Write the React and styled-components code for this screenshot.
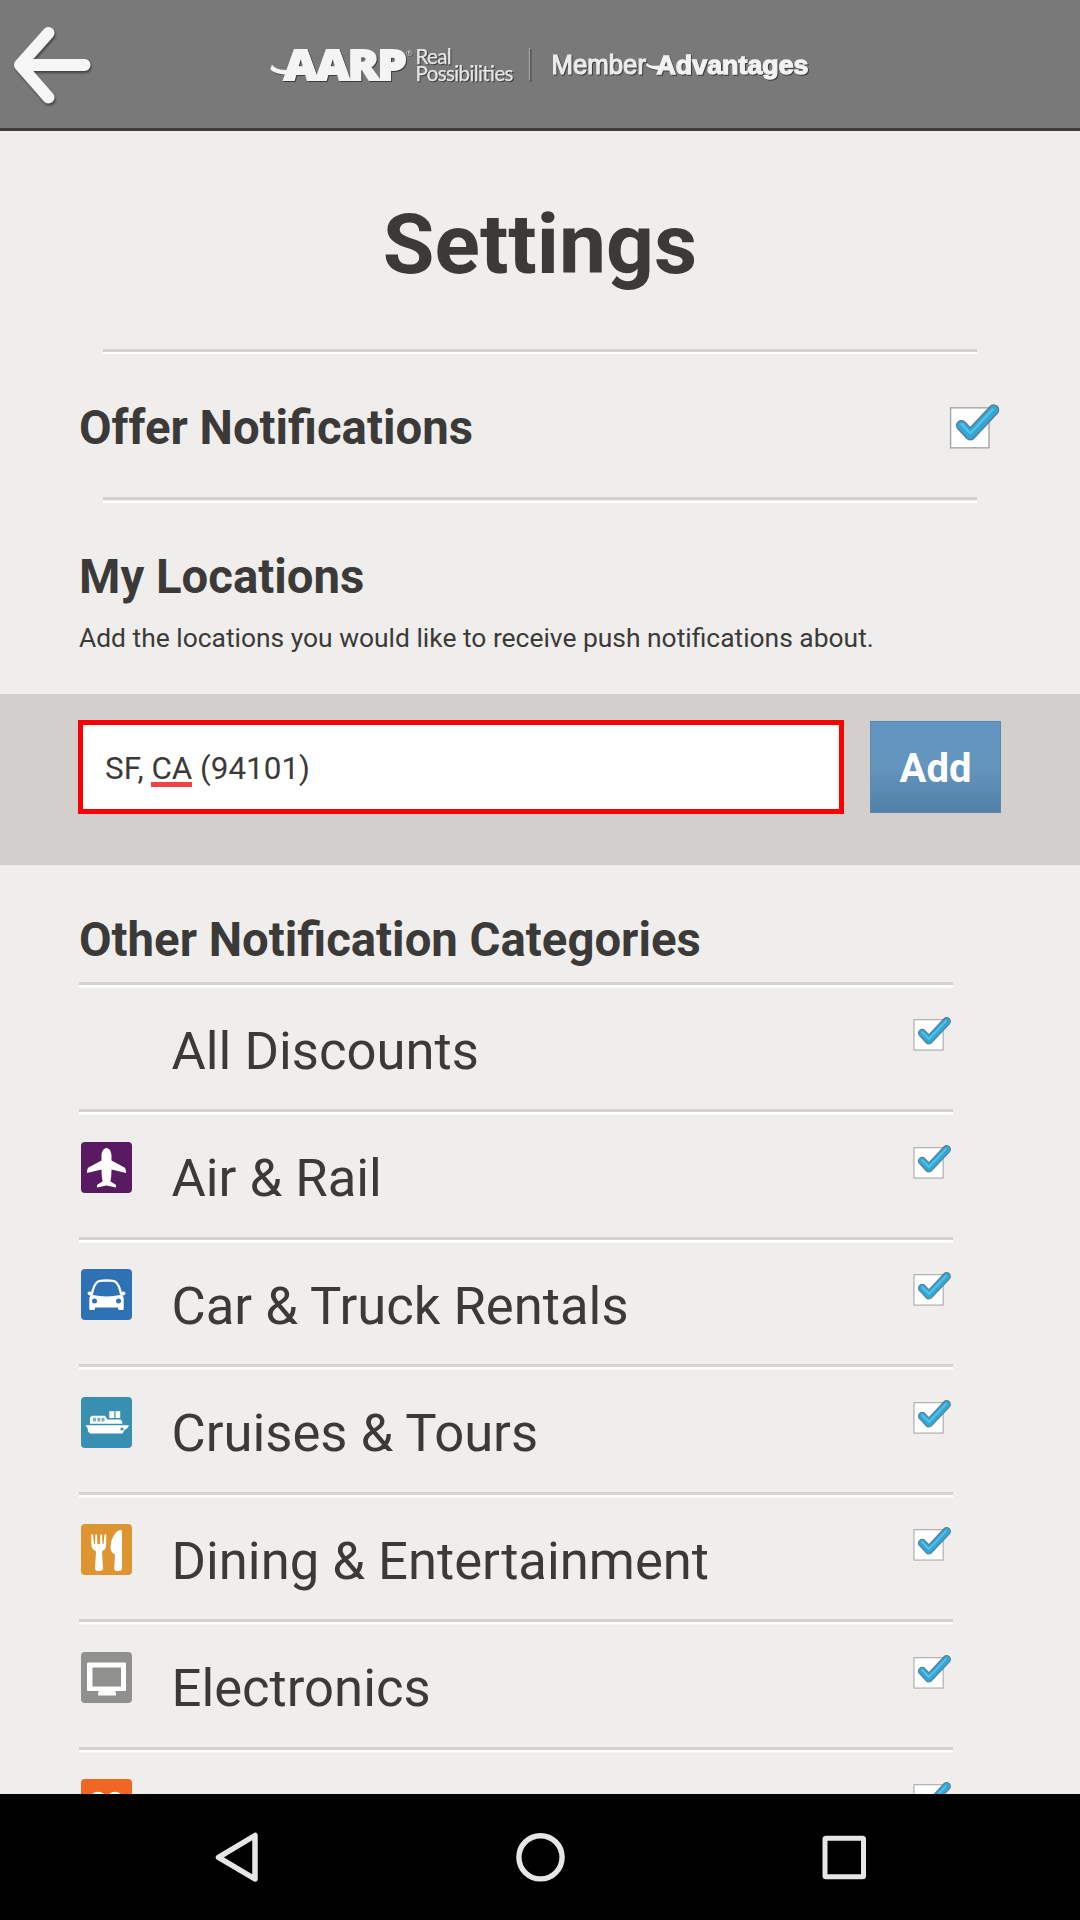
import React from "react";
import styled, { createGlobalStyle } from "styled-components";

const GlobalStyle = createGlobalStyle`
  * { box-sizing: border-box; }
  body { margin: 0; background: #efeeec; }
`;

const Screen = styled.div`
  display: flex;
  flex-direction: column;
  width: 1080px;
  height: 1920px;
  overflow: hidden;
  background: #efeeec;
  color: #3b3a39;
  font-family: Roboto, "Noto Sans", sans-serif;
`;

const Header = styled.header`
  display: grid;
  grid-template-columns: 1fr auto 1fr;
  align-items: center;
  flex: none;
  height: 131px;
  background: #797979;
  border-bottom: 3px solid #3d3b3b;
`;

const BackButton = styled.button`
  display: flex;
  width: 90px;
  height: 90px;
  margin-left: 8px;
  padding: 0;
  border: 0;
  background: none;
  svg { filter: drop-shadow(1px 2px 1px rgba(0, 0, 0, 0.45)); }
`;

const Logo = styled.svg`
  display: block;
  filter: drop-shadow(1px 1.5px 0.6px rgba(0, 0, 0, 0.5));
`;

const Main = styled.main`
  flex: 1;
  min-height: 0;
  overflow: hidden;
`;

const Title = styled.h1`
  margin: 0;
  padding-top: 54px;
  height: 217.5px;
  font-size: 84px;
  line-height: 120px;
  font-weight: 700;
  text-align: center;
`;

const Rule = styled.hr`
  margin: 0 103px;
  height: 5.5px;
  border: 0;
  border-top: 3px solid #d3d2cf;
  border-bottom: 2.5px solid #fff;
`;

const Heading = styled.h2`
  margin: 0;
  font-size: 47.3px;
  line-height: 60px;
  font-weight: 700;
`;

const OfferRow = styled.section`
  display: flex;
  align-items: center;
  justify-content: space-between;
  height: 143px;
  padding: 5px 78.5px 0 79px;
  svg { margin-top: -5px; }
`;

const Locations = styled.section`
  height: 191.5px;
  padding: 44px 79px 0;
`;

const Hint = styled.p`
  margin: 13.5px 0 0;
  font-size: 26.4px;
  line-height: 36px;
  white-space: nowrap;
`;

const AddBand = styled.form`
  display: flex;
  align-items: flex-start;
  gap: 26px;
  height: 170.5px;
  padding: 26px 79px 0 78px;
  background: #d2cfcc;
`;

const Field = styled.div`
  flex: 1;
  height: 94px;
  padding: 2px 22px 0;
  border: 5px solid #fb0000;
  background: #fff;
  font-size: 31.4px;
  line-height: 84px;
`;

const Misspelled = styled.span`
  display: inline-block;
  height: 37px;
  line-height: 37px;
  border-bottom: 5px solid #f04444;
`;

const AddButton = styled.button`
  width: 131px;
  height: 92px;
  margin-top: 1px;
  padding: 3px 0 0;
  border: 1px solid #5a8ab4;
  background: linear-gradient(#6295c1 0%, #6495bd 50%, #5280a7 100%);
  color: #fff;
  font: 700 40px Roboto, sans-serif;
`;

const Categories = styled.section`
  padding: 45px 127px 0 79px;
`;

const List = styled.ul`
  margin: 0;
  padding: 12px 0 0;
  list-style: none;
`;

const Row = styled.li`
  display: grid;
  grid-template-columns: 92.5px 1fr 41px;
  align-items: start;
  height: 127.5px;
  border-top: 3px solid #d3d2cf;
  box-shadow: inset 0 2.5px 0 #fff;
`;

const Tile = styled.span`
  display: block;
  width: 51px;
  height: 51px;
  margin: 29.5px 0 0 1.5px;
  border-radius: 4px;
  background: ${(p) => p.$color};
  svg { display: block; }
`;

const Label = styled.span`
  padding-top: 36px;
  font-size: 52.6px;
  line-height: 60px;
  white-space: nowrap;
`;

const CheckSlot = styled.span`
  padding-top: 28.5px;
`;

const NavBar = styled.nav`
  display: flex;
  align-items: center;
  justify-content: space-between;
  flex: none;
  height: 126px;
  padding: 0 211px 0 211px;
  background: #000;
  svg { display: block; }
`;

const CheckArt = styled.svg`
  display: block;
`;

function Check({ size }) {
  return (
    <CheckArt width={size} height={size} viewBox="0 0 52 52">
      <rect x="2.500" y="8.500" width="37" height="38.500" fill="#fff" stroke="#aaa9a8" strokeWidth="1.400" />
      <path d="M13 25.500L21.500 34.500L44 10.500" fill="none" stroke="#5d8194" strokeWidth="10.800" strokeLinejoin="round" strokeLinecap="round" />
      <path d="M13 25.500L21.500 34.500L44 10.500" fill="none" stroke="#30a7d7" strokeWidth="7.800" strokeLinejoin="round" strokeLinecap="round" />
      <path d="M13 24.200L21.500 33L43 10.200" fill="none" stroke="#64cdee" strokeWidth="2.400" strokeLinejoin="round" strokeLinecap="round" opacity="0.7" />
    </CheckArt>
  );
}

const icons = {
  plane: (
    <path d="M25.500 6C28.500 6 30.500 10 30.500 14V18.500L43.500 25.500Q45 26.500 45 31L30.500 27.500Q30.500 34 29.500 39.500L34.500 42.500Q35.500 43.500 35 45.500L25.500 43.500L16 45.500Q15.500 43.500 16.500 42.500L21.500 39.500Q20.500 34 20.500 27.500L6 31Q6 26.500 7.500 25.500L20.500 18.500V14C20.500 10 22.500 6 25.500 6Z" fill="#fff" />
  ),
  car: (
    <g>
      <path d="M11 25Q12.500 16 16.500 12.800Q18 11.500 25.500 11.300Q33 11.500 34.500 12.800Q38.500 16 40 25" fill="none" stroke="#fff" strokeWidth="2.200" />
      <path d="M6.500 24Q7 22 9.500 22.500Q11.300 23 11.800 26Q25.500 28.800 39.200 26Q39.700 23 41.500 22.500Q44 22 44.500 24Q44.500 26 41.500 26.500Q43 28 42.700 31V39.500Q42.700 41 41.500 41H38.500Q37 41 37 39.500V38.500H14V39.500Q14 41 12.500 41H9.500Q8.300 41 8.300 39.500V31Q8 28 9.500 26.500Q6.500 26 6.500 24Z" fill="#fff" />
      <circle cx="13.500" cy="32" r="2.500" fill="#2e72b5" />
      <circle cx="37.500" cy="32" r="2.500" fill="#2e72b5" />
    </g>
  ),
  ship: (
    <g>
      <path d="M4.500 28.200H48L46.500 31L43 33.500L41.500 36.500H9L6.800 34V31.500Z" fill="#fff" />
      <path d="M9 26.800V20.500L11 18.800H24L26.500 22.500H39Q41 22.500 41.500 26.800Z" fill="#fff" />
      <path d="M12 20.800h3v3.800h-3zM16.300 20.800h3v3.800h-3zM20.500 20.800h3v3.800h-3z" fill="#75b3c8" />
      <rect x="28.300" y="14.200" width="5" height="6.800" fill="#fff" />
      <rect x="34.500" y="14.200" width="4.700" height="6.800" fill="#fff" />
      <circle cx="41" cy="32" r="1.600" fill="#388faf" />
    </g>
  ),
  dining: (
    <g fill="#fff">
      <path d="M10.200 10.500H12L13 20H14L14.400 10.500H16L16.400 20H19L19.300 10.500H21L21.400 20H22.500L23.500 10.500H25.200V21Q25 25.500 21 27.500L22 44.500Q22 47 18 47Q14 47 14 44.500L15 27.500Q10.800 25.500 10.300 21Z" />
      <path d="M41 7V44.500Q41 47 37 47Q33.200 47 33.200 44.500L34 30.500Q29.500 28.500 29.500 23Q29.500 17 32.500 12Q36 6 39.500 6Q41 6 41 7Z" />
    </g>
  ),
  screen: (
    <g>
      <path d="M7 10.500H44Q45 10.500 45 12V38Q45 39 44 39H34.500V41H35V43.500H17V41H17.500V39H7Q6 39 6 38V12Q6 10.500 7 10.500Z" fill="#fff" />
      <rect x="11.500" y="15.500" width="28.500" height="19" fill="#90908e" />
    </g>
  ),
  goggles: (
    <g fill="none" stroke="#fff" strokeWidth="2.500">
      <circle cx="17" cy="21.500" r="7.500" />
      <circle cx="34" cy="21.500" r="7.500" />
    </g>
  ),
};

const categories = [
  { label: "All Discounts" },
  { label: "Air & Rail", icon: "plane", color: "#581b61" },
  { label: "Car & Truck Rentals", icon: "car", color: "#2e72b5" },
  { label: "Cruises & Tours", icon: "ship", color: "#388faf" },
  { label: "Dining & Entertainment", icon: "dining", color: "#dd9531" },
  { label: "Electronics", icon: "screen", color: "#90908e" },
  { label: "", icon: "goggles", color: "#f26522" },
];

export default function App() {
  return (
    <Screen>
      <GlobalStyle />
      <Header>
        <BackButton aria-label="Back">
          <svg width="90" height="90" viewBox="8 19 90 90">
            <path d="M48.500 33L20 65L48.500 97.500M20 65H84.500" fill="none" stroke="#f6f6f6" strokeWidth="12" strokeLinecap="round" strokeLinejoin="round" />
          </svg>
        </BackButton>
        <Logo width="560" height="60" viewBox="260 35 560 60">
          <text x="284" y="80.500" fill="#f4f4f4" stroke="#f4f4f4" strokeWidth="2" fontFamily="Open Sans, sans-serif" fontWeight="800" fontSize="43" letterSpacing="-1.500" textLength="121" lengthAdjust="spacingAndGlyphs">AARP</text>
          <path d="M272 65.500C276 71 283 71.500 292 70.500C303 69.500 309 73 312 78C305 73.500 296 74.500 288 75.500C279 76 272 73 270.300 70Z" fill="#f4f4f4" />
          <text x="406" y="57" fontSize="8" fill="#ddd" fontFamily="Lato, sans-serif">®</text>
          <g fill="#e6e6e6" stroke="#e6e6e6" strokeWidth="0.250" fontFamily="Lato, sans-serif" fontSize="20.500">
            <text x="415.500" y="65" textLength="36">Real</text>
            <text x="415.500" y="81.500" textLength="98">Possibilities</text>
          </g>
          <path d="M529.500 49V81.500" stroke="#a2a2a2" strokeWidth="1.500" />
          <text x="551.500" y="74.500" fontSize="27.500" fill="#ececec" stroke="#ececec" strokeWidth="1.200" fontFamily="Liberation Sans, sans-serif" textLength="94.500" lengthAdjust="spacingAndGlyphs">Member</text>
          <text x="656.500" y="74.500" fontSize="26.500" fontWeight="700" fill="#f2f2f2" stroke="#f2f2f2" strokeWidth="1.300" fontFamily="Liberation Sans, sans-serif" textLength="152" lengthAdjust="spacingAndGlyphs">Advantages</text>
          <path d="M647 64C650 67.500 655 67 661 66.500V71C655 71 648 69.500 646 66Z" fill="#f2f2f2" />
        </Logo>
      </Header>
      <Main>
        <Title>Settings</Title>
        <Rule />
        <OfferRow>
          <Heading>Offer Notifications</Heading>
          <Check size={54} />
        </OfferRow>
        <Rule />
        <Locations>
          <Heading>My Locations</Heading>
          <Hint>Add the locations you would like to receive push notifications about.</Hint>
        </Locations>
        <AddBand>
          <Field>
            SF, <Misspelled>CA</Misspelled> (94101)
          </Field>
          <AddButton type="button">Add</AddButton>
        </AddBand>
        <Categories>
          <Heading>Other Notification Categories</Heading>
          <List>
            {categories.map((c, i) => (
              <Row key={i}>
                {c.icon ? (
                  <Tile $color={c.color}>
                    <svg width="51" height="51" viewBox="0 0 51 51">{icons[c.icon]}</svg>
                  </Tile>
                ) : (
                  <span />
                )}
                <Label>{c.label}</Label>
                <CheckSlot>
                  <Check size={41} />
                </CheckSlot>
              </Row>
            ))}
          </List>
        </Categories>
      </Main>
      <NavBar>
        <svg width="52" height="60" viewBox="211 1827 52 60">
          <path d="M255 1835.500V1879L218.500 1857.300Z" fill="none" stroke="#e6e6e6" strokeWidth="5.500" strokeLinejoin="round" />
        </svg>
        <svg width="52" height="60" viewBox="514 1827 52 60">
          <circle cx="540.500" cy="1857.300" r="21.600" fill="none" stroke="#e6e6e6" strokeWidth="5.400" />
        </svg>
        <svg width="52" height="60" viewBox="817 1827 52 60">
          <rect x="825" y="1838.300" width="38.500" height="38.500" rx="1" fill="none" stroke="#e6e6e6" strokeWidth="5" />
        </svg>
      </NavBar>
    </Screen>
  );
}
